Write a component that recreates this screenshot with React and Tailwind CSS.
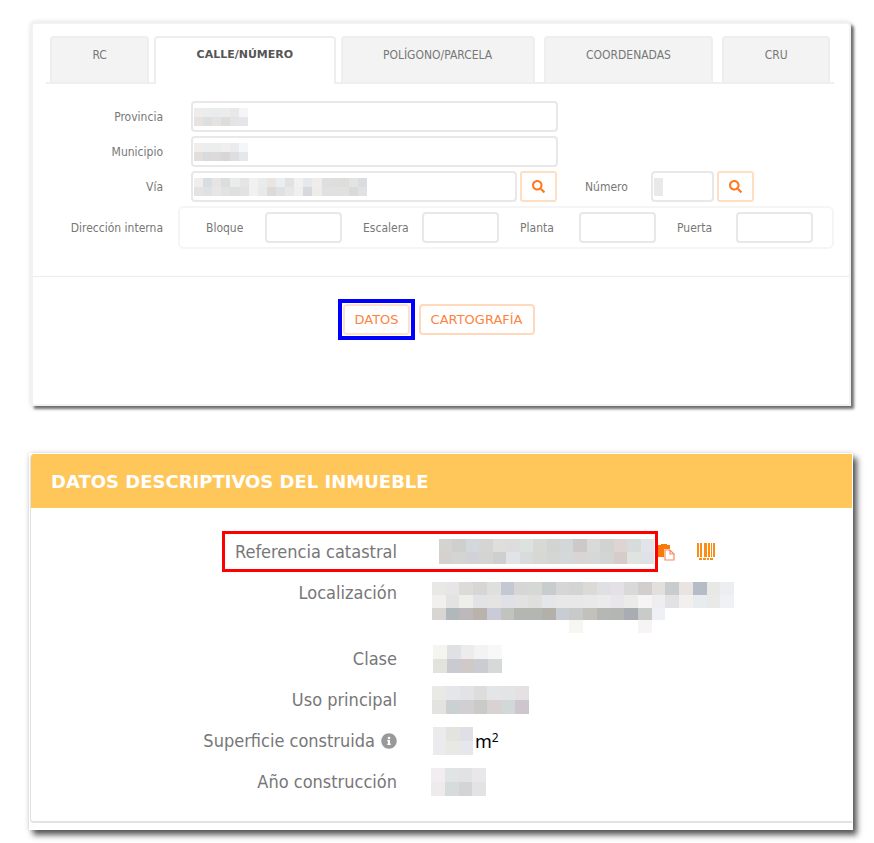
import React, { useState } from 'react';
import { FaSearch, FaInfoCircle } from 'react-icons/fa';

const TABS = [
    { id: 'rc', label: 'RC' },
    { id: 'calle', label: 'CALLE/NÚMERO' },
    { id: 'poligono', label: 'POLÍGONO/PARCELA' },
    { id: 'coordenadas', label: 'COORDENADAS' },
    { id: 'cru', label: 'CRU' },
];

const INTERNAL_FIELDS = ['Bloque', 'Escalera', 'Planta', 'Puerta'];

// Pixelated values, one hex colour per cell
const MASKS = {
    provincia: [
        '#f0eceb #ebeced #e9ecee #ececeb #e7e8ea #f3f5f8',
        '#e6e3e1 #dfdfdf #e3e3e3 #dfdddb #e4e4e6 #e6e6e8',
    ],
    municipio: [
        '#efeeec #ecedec #ebeeed #efefef #e9ebed #f4f6f8',
        '#e2dedb #d8dadc #dddbda #dad6d5 #dcdee1 #e5e7eb',
    ],
    via: [
        '#f0edec #d8dce3 #e6e5e4 #dddddf #e9ecea #e5e5e5 #f1f1f1 #eaecec #ebe5e0 #eaeef3 #e1e3e2 #f2f1ef #e6e9eb #efeceb #dfdfe0 #dfdedd #dfdddb #e2e3e3 #dadcdf',
        '#e5e3e1 #e0e1e4 #e6e6e6 #e3e2e2 #dedfdf #e1e3e3 #f0f1f1 #e8eaea #dedad7 #dfe1e4 #e7e7e7 #efefed #d6d9dd #eeecea #e0e1e2 #e1e1e1 #e0e1e1 #dcdad7 #dfe1e5',
    ],
    numero: ['#e9e9e9', '#e9e9e9'],
    referencia: [
        '#d3d3d0 #cfcfcd #d3d8dc #d5d5d5 #dfdedd #dcdddc #dce2e0 #d8d8d4 #d1d4d1 #d2d7da #cdc9c8 #d9d9d9 #d0d3d2 #ded4d1 #d5dcdb #e1e4e8',
        '#d5d1cf #d2d5d0 #d1d1d7 #d4d4d3 #cfcfcf #e1e3e6 #d9dcdb #d7d7d4 #d5d6d4 #d4d8d8 #d9d5d4 #d5d8d6 #d3d4d4 #d6cdca #dfe4e1 #dfe1e6',
    ],
    localizacion: [
        '#e8e9e5 #e7e5e7 #dcdbd7 #d7d6d4 #dde0dc #c4c8d2 #d6d6d7 #d6d8d6 #c7cccc #d6d6d6 #d3d5d4 #dcdad7 #dfe0e3 #e4e0e6 #d9d9da #d2cecd #e2dfdd #c8cccc #e9e3e1 #b5bcc7 #e8e8e7 #edeef1',
        '#f1f0ee #e3e3e4 #eeefea #e2e3e7 #e6e4e3 #dfe1e7 #e2e2e3 #dfdfde #e4e6e9 #e8e8e8 #e8e8e8 #e9e9e9 #ebebeb #e8e5eb #ebebea #f7f4f5 #eeeef0 #e2e1e3 #f1f0ef #e7ecef #e9e9e7 #eff1f4',
        '#d8d5d2 #b1b8bc #bdb9bb #bab3ac #cacbd9 #c0c3be #b4b6b2 #b4b6b2 #b3b0aa #c8ccd5 #c8cac9 #c2c1bb #b4b7b3 #b4b6b3 #a9adb1 #c9cbc9 #eff0f5 #fff #fff #fff #fff #fff',
        '#fff #fff #fff #fff #fff #fff #fff #fff #fff #fff #f6f6f3 #fff #fff #fff #fff #f6f4f5 #fff #fff #fff #fff #fff #fff',
    ],
    clase: ['#f4f5ef #e0e1e5 #ececec #f3f3f3 #f7f8f8', '#e2e3dc #cacbd0 #cfcac7 #cbccd2 #d7d9d9'],
    uso: [
        '#e9eae5 #e5e6ec #e2e3e6 #dddddb #e4e5e9 #e2e5e4 #e5e0e1',
        '#e3e4e2 #cbd1d2 #d1cfd1 #cacac8 #d9d2d3 #d2d8d7 #cdc6cc',
    ],
    superficie: ['#ebebee #e3e3e0 #dfe0e6', '#ebebee #e8e9e3 #e6e7ec'],
    anio: ['#f1edf0 #e0e4e5 #e1e2e4 #e9e7e9', '#efebed #d5dcdb #d5d4d5 #e3e2e4'],
};

const Mosaic = ({ name, className }) => (
    <span aria-hidden="true" className={`flex flex-col ${className}`}>
        {MASKS[name].map((row, i) => (
            <span key={i} className="flex flex-1">
                {row.split(' ').map((color, j) => (
                    <span key={j} className="flex-1" style={{ backgroundColor: color }} />
                ))}
            </span>
        ))}
    </span>
);

const TextField = ({ id, mask, maskClass = '', className = '', ...rest }) => (
    <span className={`relative flex ${className}`}>
        <input
            id={id}
            type="text"
            className="h-[31px] w-full min-w-0 rounded-[4px] border-2 border-[#e8e8e8] bg-white px-2 text-xs text-[#666]"
            {...rest}
        />
        {mask && <Mosaic name={mask} className={`pointer-events-none absolute left-[3px] top-[7px] h-[18px] ${maskClass}`} />}
    </span>
);

const SearchButton = ({ label }) => (
    <button
        type="button"
        aria-label={label}
        className="flex h-[31px] w-[37px] shrink-0 items-center justify-center rounded-[3px] border-2 border-[#ffdfc4] bg-white text-[#fd7a1e]"
    >
        <FaSearch className="size-[13px]" />
    </button>
);

const FieldRow = ({ id, label, children }) => (
    <div className="grid grid-cols-[117px_1fr] items-center gap-7">
        <label htmlFor={id} className="text-right">{label}</label>
        <div className="flex items-center">{children}</div>
    </div>
);

const CopyIcon = () => (
    <svg width="18" height="18" viewBox="0 0 18 18" fill="none">
        <path d="M0 2h3V1h6v1h3v4H6v8H0z" fill="#f97a08" />
        <path d="M7 7h5l4 4v6H7z" fill="#fff" stroke="#fb8a5c" strokeWidth="1.2" />
        <path d="M12 7v4h4" stroke="#fb8a5c" strokeWidth="1.2" />
    </svg>
);

const BarcodeIcon = () => (
    <svg width="18" height="18" viewBox="0 0 18 18" fill="#fb8c14">
        <path d="M0 0h2v14H0zM3 0h2v14H3zM7 0h3v14H7zM11 0h2v14h-2zM14 0h1v14h-1zM16 0h2v14h-2z" />
        <path d="M2 15h3v2H2zM6 15h3v2H6zM10 15h2v2h-2zM13 15h3v2h-3z" />
    </svg>
);

const DataRow = ({ label, className = 'h-[41px]', children }) => (
    <div className={`relative flex ${className}`}>
        <dt className="flex h-[41px] w-[366px] shrink-0 items-center justify-end gap-[6px]">{label}</dt>
        <dd className="flex h-[41px] items-center">{children}</dd>
    </div>
);

const SearchPanel = () => {
    const [activeTab, setActiveTab] = useState('calle');

    return (
        <section className="mx-[2px] flex flex-col rounded-t-[4px] border-2 border-[#f2f2f2] bg-white text-xs text-[#777] shadow-[3px_3px_3px_rgba(0,0,0,0.55),0_0_5px_rgba(0,0,0,0.15)]">
            <div role="tablist" className="mr-[15px] ml-[13px] mt-3 flex items-end gap-[9px] border-b-2 border-[#efefef] px-[4px]">
                {TABS.map((tab) => (
                    <button
                        key={tab.id}
                        type="button"
                        role="tab"
                        aria-selected={activeTab === tab.id}
                        onClick={() => setActiveTab(tab.id)}
                        className={`flex flex-auto justify-center rounded-t-[4px] border-2 border-b-0 border-[#eeeeee] pt-[9px] leading-4 ${activeTab === tab.id
                            ? '-mx-1 -mb-[2px] h-[48px] bg-white font-["DejaVu_Sans"] text-[11px] font-bold text-[#555]'
                            : 'h-[46px] bg-[#f3f3f3]'
                            }`}
                    >
                        {tab.label}
                    </button>
                ))}
            </div>

            <form className="flex flex-col" onSubmit={(e) => e.preventDefault()}>
                <div className="mx-[13px] mt-[17px] flex flex-col gap-[4px]">
                    <FieldRow id="provincia" label="Provincia">
                        <TextField id="provincia" mask="provincia" maskClass="w-[54px]" className="w-[367px]" />
                    </FieldRow>
                    <FieldRow id="municipio" label="Municipio">
                        <TextField id="municipio" mask="municipio" maskClass="w-[54px]" className="w-[367px]" />
                    </FieldRow>
                    <FieldRow id="via" label="Vía">
                        <TextField id="via" mask="via" maskClass="w-[173px]" className="mr-[3px] w-[326px]" />
                        <SearchButton label="Buscar vía" />
                        <label htmlFor="numero" className="ml-7 w-[66px]">Número</label>
                        <TextField id="numero" mask="numero" maskClass="w-[9px]" className="mr-[3px] w-[63px]" />
                        <SearchButton label="Buscar número" />
                    </FieldRow>
                    <div className="grid grid-cols-[117px_1fr] items-center gap-[15px]">
                        <span id="interna" className="text-right">Dirección interna</span>
                        <div role="group" aria-labelledby="interna" className="mr-[2px] grid grid-cols-4 gap-[21px] rounded-[6px] border-2 border-[#f5f5f5] py-[4px] pr-[19px] pl-[26px]">
                            {INTERNAL_FIELDS.map((name) => (
                                <div key={name} className="flex items-center">
                                    <label htmlFor={name} className="w-[59px] shrink-0">{name}</label>
                                    <TextField id={name} className="flex-1" />
                                </div>
                            ))}
                        </div>
                    </div>
                </div>

                <div className="mt-[27px] flex justify-center gap-[4px] border-t border-[#ececec] pt-[22px] pr-[9px] pb-[64px] font-['DejaVu_Sans'] text-[13px] text-[#fd8440]">
                    <span className="border-4 border-[#0000fe] p-px">
                        <button type="button" className="h-[31px] rounded-[4px] border-2 border-[#ffe0cb] px-[9px]">DATOS</button>
                    </span>
                    <button type="button" className="mt-[5px] h-[31px] rounded-[4px] border-2 border-[#ffd9bb] px-[10px]">CARTOGRAFÍA</button>
                </div>
            </form>
        </section>
    );
};

const DetailsPanel = () => (
    <section className="border border-white bg-white pb-[6px] shadow-[4px_5px_6px_rgba(0,0,0,0.65),0_0_5px_rgba(0,0,0,0.15)]">
        <div className="overflow-hidden rounded-l-[4px] border-b-2 border-l border-[#e2e2e2] pb-[19px]">
            <h2 className="bg-[#ffc65a] px-[20px] pt-[18px] pb-[16px] font-['DejaVu_Sans'] text-lg leading-5 font-bold text-white">
                DATOS DESCRIPTIVOS DEL INMUEBLE
            </h2>
            <dl className="mt-[23px] text-lg text-[#777]">
                <DataRow label="Referencia catastral">
                    <Mosaic name="referencia" className="ml-[42px] h-[25px] w-[215px]" />
                    <button type="button" aria-label="Copiar referencia" className="ml-[4px]"><CopyIcon /></button>
                    <button type="button" aria-label="Código de barras" className="ml-[21px]"><BarcodeIcon /></button>
                    <span className="pointer-events-none absolute inset-y-0 left-[191px] w-[436px] border-3 border-[#fe0000]" />
                </DataRow>
                <DataRow label="Localización" className="h-[66px]">
                    <Mosaic name="localizacion" className="mt-[10px] ml-[35px] h-[51px] w-[302px] shrink-0 self-start" />
                </DataRow>
                <DataRow label="Clase">
                    <Mosaic name="clase" className="ml-[36px] h-[28px] w-[69px]" />
                </DataRow>
                <DataRow label="Uso principal">
                    <Mosaic name="uso" className="ml-[35px] h-[28px] w-[97px]" />
                </DataRow>
                <DataRow label={<>Superficie construida <FaInfoCircle className="size-4 text-[#999]" /></>}>
                    <Mosaic name="superficie" className="mr-[2px] ml-[36px] h-[28px] w-[40px]" />
                    <span className="font-['Noto_Sans'] text-black">m<sup className="text-xs">2</sup></span>
                </DataRow>
                <DataRow label="Año construcción">
                    <Mosaic name="anio" className="ml-[34px] h-[28px] w-[55px]" />
                </DataRow>
            </dl>
        </div>
    </section>
);

const App = () => (
    <div className="flex flex-col gap-[47px] bg-white pt-[22px] pr-[21px] pb-[14px] pl-[29px] font-['DejaVu_Sans_Condensed','Noto_Sans',sans-serif]">
        <SearchPanel />
        <DetailsPanel />
    </div>
);

export default App;
